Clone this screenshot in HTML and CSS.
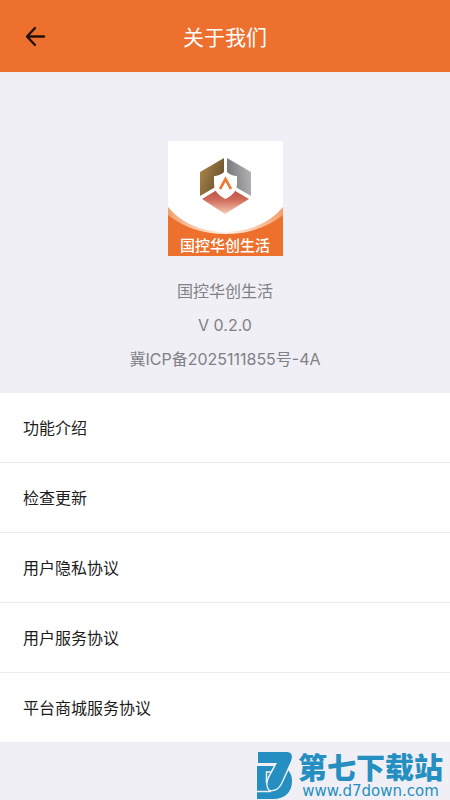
FILE: index.html
```html
<!DOCTYPE html>
<html lang="zh-CN">
<head>
    <meta charset="UTF-8">
    <meta name="viewport" content="width=device-width, initial-scale=1.0">
    <title>关于我们</title>
    <link rel="stylesheet" href="styles.css">
</head>
<body>
    <header class="navbar">
        <button class="back" type="button" aria-label="返回">
            <svg width="24" height="24" viewBox="0 0 24 24" fill="none" stroke="currentColor" stroke-width="2.4" stroke-linecap="round" stroke-linejoin="round">
                <path d="M20 12.500H3M11 4L3 12.500L11 21"/>
            </svg>
        </button>
        <h1 class="title">关于我们</h1>
    </header>

    <!-- App logo and version -->
    <main class="content">
        <section class="about">
            <div class="logo">
                <svg class="logo-art" viewBox="0 0 115 115" aria-hidden="true">
                    <defs>
                        <linearGradient id="gold" x1="0" y1="0" x2="1" y2="0.6">
                            <stop offset="0" stop-color="#b18b48"/>
                            <stop offset="1" stop-color="#68502f"/>
                        </linearGradient>
                        <linearGradient id="silver" x1="0" y1="0.6" x2="1" y2="0.4">
                            <stop offset="0" stop-color="#77777a"/>
                            <stop offset="1" stop-color="#b2b2b4"/>
                        </linearGradient>
                        <linearGradient id="red" x1="0" y1="0" x2="0" y2="1">
                            <stop offset="0" stop-color="#b5423a"/>
                            <stop offset="0.5" stop-color="#cf6b59"/>
                            <stop offset="1" stop-color="#f7c9b0"/>
                        </linearGradient>
                        <linearGradient id="wave" x1="0" y1="0" x2="1" y2="0">
                            <stop offset="0" stop-color="#f3a06c"/>
                            <stop offset="0.5" stop-color="#fff3e9"/>
                            <stop offset="1" stop-color="#f3a06c"/>
                        </linearGradient>
                    </defs>
                    <path fill="#fff" d="M0 0H115V115H0z"/>
                    <path fill="url(#wave)" d="M0 66Q20 90 57 91Q95 90 115 66V115H0z"/>
                    <path fill="#ed702d" d="M0 74Q24 93 57 93Q91 93 115 74V115H0z"/>
                    <path fill="url(#gold)" d="M32 31L56 17V41L32 55z"/>
                    <path fill="url(#silver)" d="M59 17L83 31V55L59 41z"/>
                    <path fill="url(#red)" d="M34 58L57 44L81 58L57 73z"/>
                    <path fill="#fff" d="M57.500 30C62 34 66 35 69 35V42C69 50 65 54 57.500 58C50 54 46 50 46 42V35C49 35 53 34 57.500 30z"/>
                    <path fill="none" stroke="#ef7a32" stroke-width="2.600" d="M52 48L57.500 38L63 48"/>
                </svg>
                <span class="logo-name">国控华创生活</span>
            </div>
            <p class="info">国控华创生活</p>
            <p class="info">V 0.2.0</p>
            <p class="info">冀ICP备2025111855号-4A</p>
        </section>

        <nav class="menu">
            <a href="#intro">功能介绍</a>
            <a href="#update">检查更新</a>
            <a href="#privacy">用户隐私协议</a>
            <a href="#service">用户服务协议</a>
            <a href="#mall">平台商城服务协议</a>
        </nav>
    </main>

    <footer class="site">
        <svg class="site-mark" width="36" height="48" viewBox="0 0 36 48" aria-hidden="true">
            <path fill="#268fc1" d="M0 14H24C32 17 35 22 35 29C35 40 28 47 16 47H0z"/>
            <path fill="none" stroke="#f0eff5" stroke-width="1.500" d="M0 39.500H14M9.500 31V20H16"/>
            <path fill="#268fc1" stroke="#f0eff5" stroke-width="3" paint-order="stroke" d="M1 0H29C35 0 36 4 34 9L25 29C22 36 19 38 13 38C10 35 10 31 12 26L20 11H1z"/>
        </svg>
        <div class="site-text">
            <strong class="site-name">第七下载站</strong>
            <span class="site-url">www.d7down.com</span>
        </div>
    </footer>
</body>
</html>
```
FILE: styles.css
```css
* {
    box-sizing: border-box;
}
body {
    margin: 0;
    min-height: 100vh;
    display: flex;
    flex-direction: column;
    background-color: #f0eff5;
    color: #1c1c1c;
    font-family: "Noto Sans CJK SC", sans-serif;
    font-size: 16px;
}
.navbar {
    display: grid;
    grid-template-columns: 48px 1fr 48px;
    align-items: center;
    height: 72px;
    padding: 0 12px;
    background-color: #ed702f;
}
.back {
    display: flex;
    padding: 12px;
    border: none;
    background: none;
    color: #24120a;
    cursor: pointer;
}
.title {
    margin: 0;
    color: #fff;
    font-size: 21px;
    font-weight: normal;
    line-height: 30px;
    text-align: center;
}
.about {
    display: flex;
    flex-direction: column;
    align-items: center;
    gap: 10px;
    padding: 69px 16px 22px;
}
.logo {
    display: grid;
    width: 115px;
    height: 115px;
    margin-bottom: 13px;
}
.logo-art,
.logo-name {
    grid-area: 1 / 1;
}
.logo-name {
    align-self: end;
    color: #fff;
    font-size: 15px;
    font-weight: 500;
    line-height: 22px;
    text-align: center;
}
.info {
    margin: 0;
    color: #818085;
    font-family: Inter, "Noto Sans CJK SC", sans-serif;
    line-height: 24px;
}
.menu {
    background-color: #fff;
}
.menu a {
    display: block;
    padding: 23px;
    border-bottom: 1px solid #ececee;
    color: inherit;
    line-height: 23px;
    text-decoration: none;
}
.menu a:last-child {
    border-bottom: none;
}
.site {
    display: flex;
    justify-content: flex-end;
    align-items: flex-end;
    gap: 5px;
    margin-top: auto;
    padding-right: 7px;
    color: #268fc1;
}
.site-text {
    display: flex;
    flex-direction: column;
    align-items: center;
}
.site-name {
    font-size: 29px;
    font-weight: 900;
    line-height: 32px;
}
.site-url {
    font-family: "DejaVu Sans", sans-serif;
    font-size: 15px;
    line-height: 18px;
}
```
